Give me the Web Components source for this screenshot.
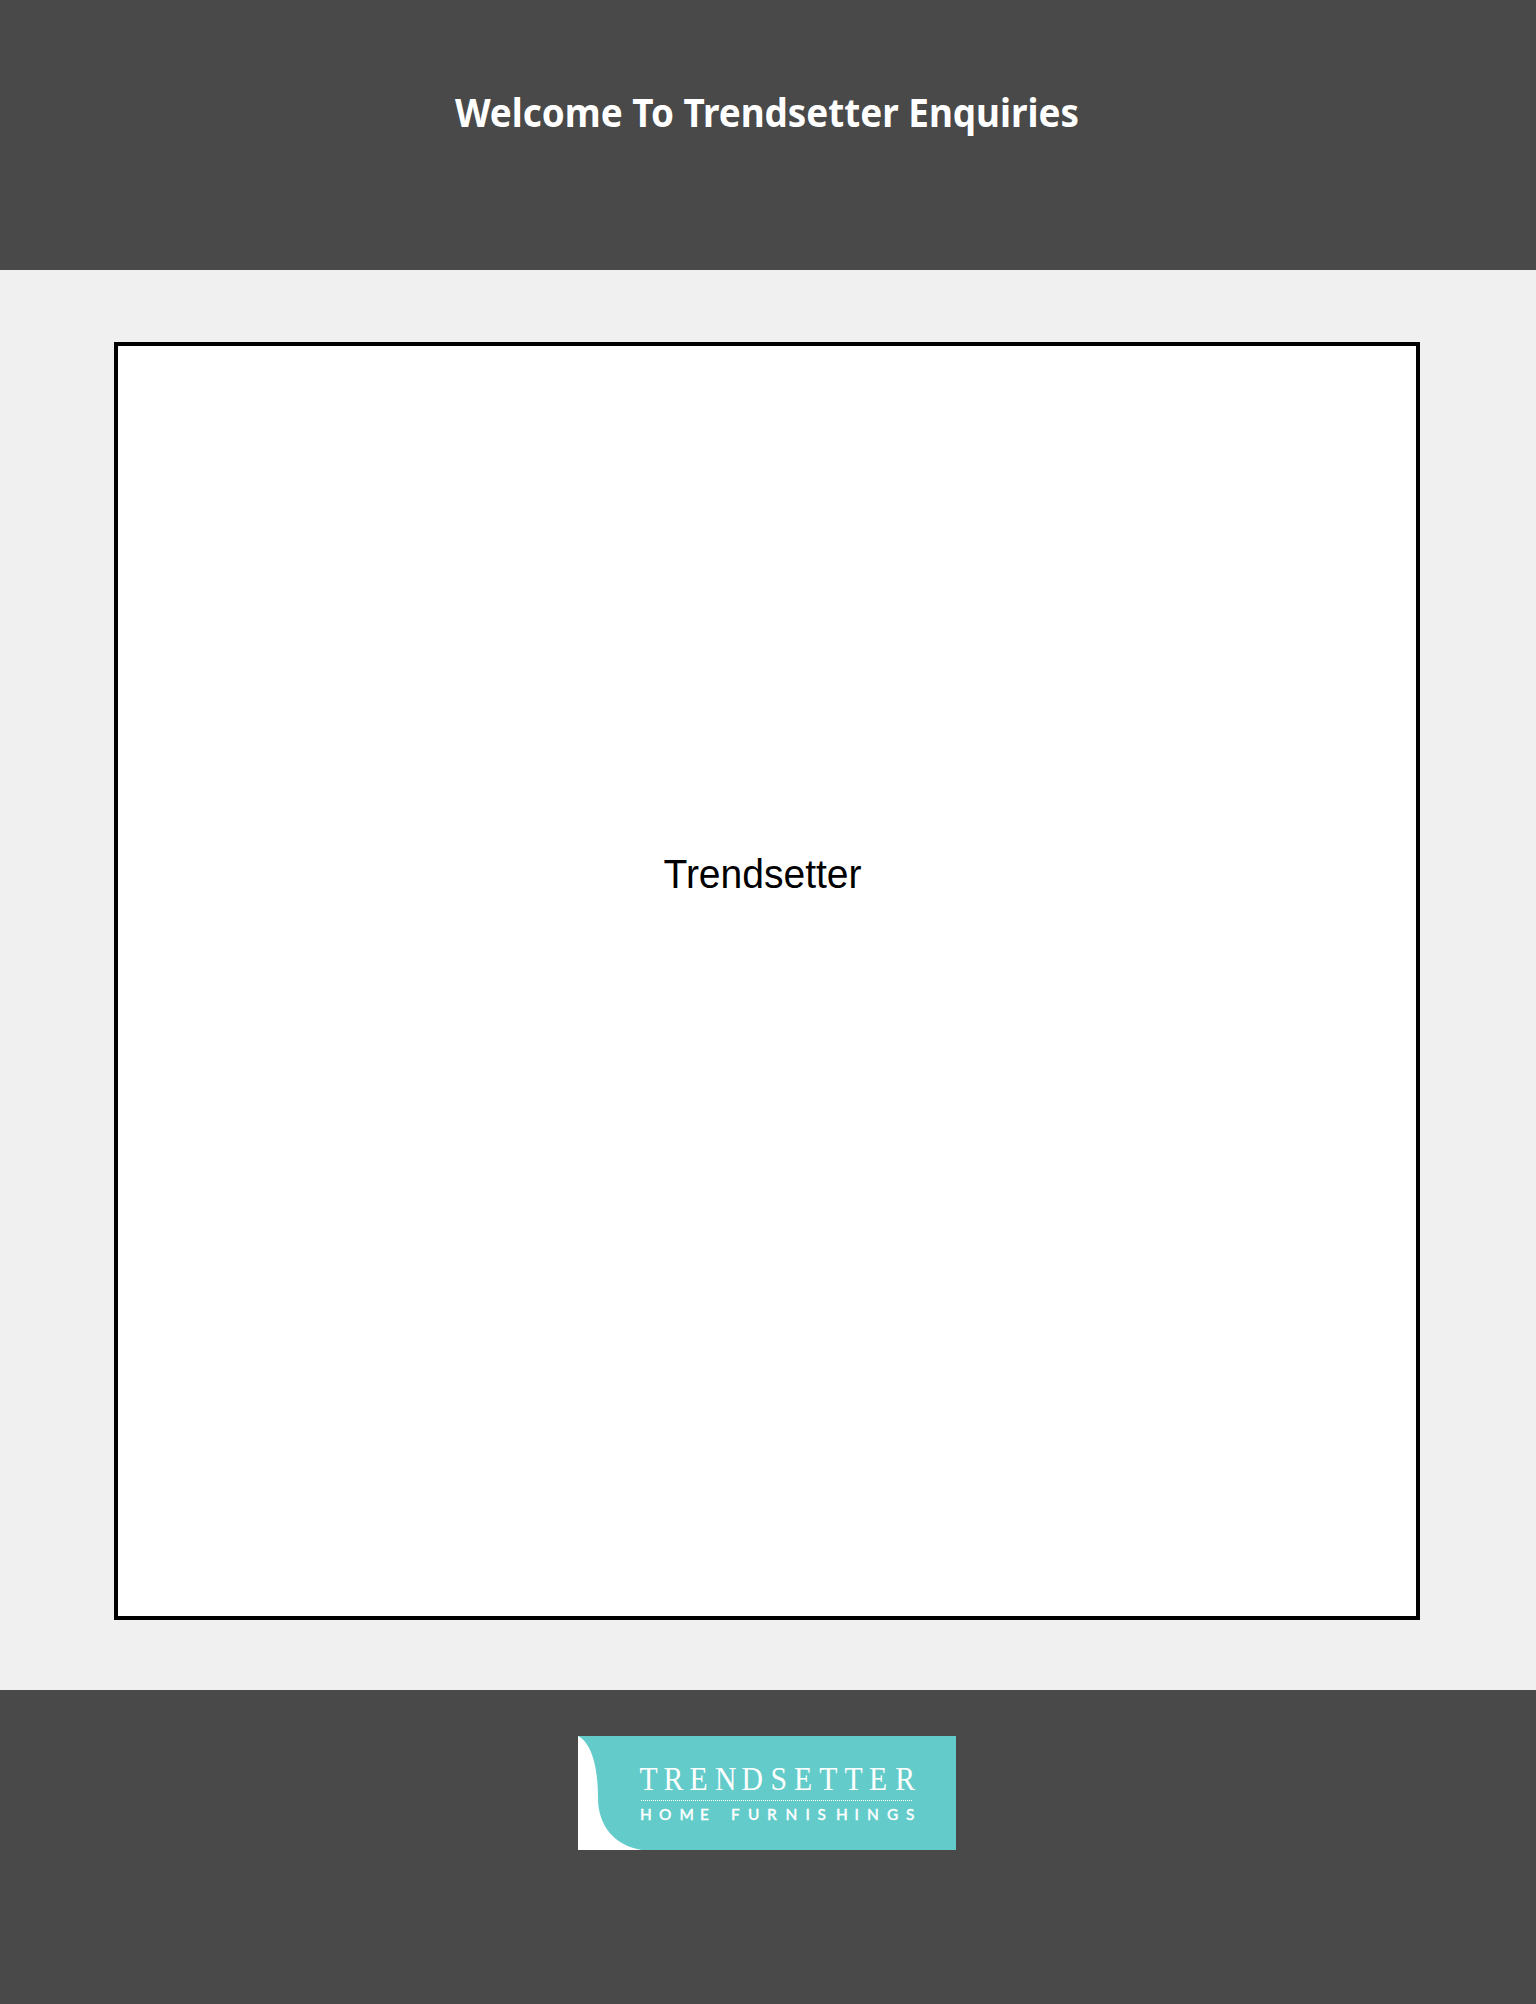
<!DOCTYPE html>
<html lang="en"><head><meta charset="utf-8"><title>Trendsetter Enquiries</title>
<style>body{margin:0;background:#f0f0f0}</style></head><body>
<enquiry-page>
<page-banner slot="header"></page-banner>
<content-card></content-card>
<page-footer slot="footer"><brand-logo></brand-logo></page-footer>
</enquiry-page>
<script>
const define=(name,html)=>customElements.define(name,class extends HTMLElement{
constructor(){super();const t=document.createElement('template');t.innerHTML=html;this.attachShadow({mode:'open'}).append(t.content.cloneNode(true));}});
define('enquiry-page',`<style>:host{display:flex;flex-direction:column;height:2004px;background:#f0f0f0}main{box-sizing:border-box;height:1420px;padding:72px 116px 70px 114px;display:flex}</style><slot name="header"></slot><main><slot></slot></main><slot name="footer"></slot>`);
define('page-banner',`<style>:host{display:flex;justify-content:center;box-sizing:border-box;height:270px;padding-top:80px;background:#494949}svg{display:block}text{font:bold 40px "Noto Sans","Open Sans",sans-serif;fill:#fff}</style><svg width="1536" height="80" role="heading" aria-level="1"><text x="455" y="47" textLength="624" lengthAdjust="spacingAndGlyphs">Welcome To Trendsetter Enquiries</text></svg>`);
define('content-card',`<style>:host{display:flex;justify-content:center;box-sizing:border-box;flex:1;border:4px solid #000;background:#fff;padding-top:494px}svg{display:block}text{font:40px "Liberation Sans",Arial,sans-serif;fill:#000}</style><svg width="1298" height="70"><text x="545.5" y="48" textLength="198" lengthAdjust="spacingAndGlyphs">Trendsetter</text></svg>`);
define('page-footer',`<style>:host{display:flex;justify-content:center;align-items:flex-start;box-sizing:border-box;flex:1;padding:46px 2px 0 0;background:#494949}</style><slot></slot>`);
define('brand-logo',`<style>:host{display:block;width:378px;height:114px}svg{display:block}.n{font:33px "Liberation Serif",serif}.s{font:500 15.4px Lato,sans-serif;stroke:#fff;stroke-width:.35px}text{fill:#fff}</style>
<svg width="378" height="114" viewBox="0 0 378 114"><rect width="378" height="114" fill="#63ccca"/>
<path d="M0 0C12 6 20 27 20 62C20 91 38 110 64 114H0Z" fill="#fff"/>
<text class="n" y="54" transform="scale(.9 1)" x="68.3 95 123.9 152.2 181.7 214 240 268 296.1 323.3 352.5">TRENDSETTER</text>
<path d="M63 64.5H334" stroke="#fff" stroke-dasharray="1 1"/>
<text class="s" y="84" x="62 81 101.5 122 140 153 170 189 207.5 227.5 239.5 258 276.5 289 309 328">HOME FURNISHINGS</text></svg>`);
</script></body></html>
